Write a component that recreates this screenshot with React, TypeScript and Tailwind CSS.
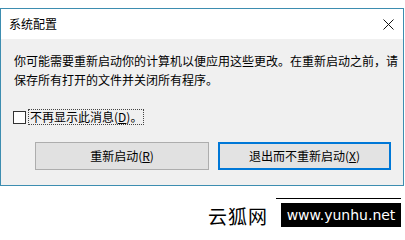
import React from "react";

export default function App() {
  const font = { fontFamily: '"Noto Sans CJK SC", "Noto Sans", sans-serif' };
  return (
    <div className="w-[405px] h-[228px] bg-white overflow-hidden flex flex-col text-black" style={font}>
      <div className="h-[8px]" />
      <div className="w-[404px] border border-[#3d8db0] flex flex-col">
        <div className="h-[30px] bg-white flex items-center justify-between pl-[8px] pr-[9px]">
          <span className="text-[12px] leading-none">系统配置</span>
          <svg width="11" height="11" viewBox="0 0 11 11" className="block">
            <path d="M0.5 0.5 L10.5 10.5 M10.5 0.5 L0.5 10.5" stroke="#111" strokeWidth="1" fill="none" />
          </svg>
        </div>
        <div className="bg-[#f0f0f0] flex flex-col pt-[12px] pb-[15px]">
          <p className="px-[13px] text-[12px] leading-[19px] whitespace-nowrap">
            你可能需要重新启动你的计算机以便应用这些更改。在重新启动之前，请
            <br />
            保存所有打开的文件并关闭所有程序。
          </p>
          <div className="mt-[20px] flex items-center pl-[12px] h-[16px]">
            <span className="w-[13px] h-[13px] border border-[#333] bg-white box-border" />
            <span className="ml-[2px] h-[16px] px-[1px] flex items-center border border-dotted border-[#444] text-[12px] leading-none">
              不再显示此消息(<span className="underline">D</span>)。
            </span>
          </div>
          <div className="mt-[17px] flex pl-[34px] gap-[9px]">
            <button className="w-[174px] h-[28px] bg-[#e1e1e1] border border-[#adadad] text-[12px] leading-none">
              重新启动(<span className="underline">R</span>)
            </button>
            <button className="w-[173px] h-[28px] bg-[#e3e3e3] border-2 border-[#0078d7] text-[12px] leading-none">
              退出而不重新启动(<span className="underline">X</span>)
            </button>
          </div>
        </div>
      </div>
      <div className="flex justify-end pr-[4px] mt-[12px]">
        <div className="w-[125px] h-[1px] bg-black" />
      </div>
      <div className="flex justify-end items-center pr-[4px] mt-[4px] gap-[13px]">
        <span className="text-[19px] leading-none tracking-[1px]" style={{ fontFamily: '"Noto Sans CJK SC", serif' }}>云狐网</span>
        <div className="w-[120px] h-[24px] bg-black text-white flex items-center justify-center text-[14px] leading-none" style={{ fontFamily: '"DejaVu Sans", sans-serif' }}>
          www.yunhu.net
        </div>
      </div>
    </div>
  );
}
